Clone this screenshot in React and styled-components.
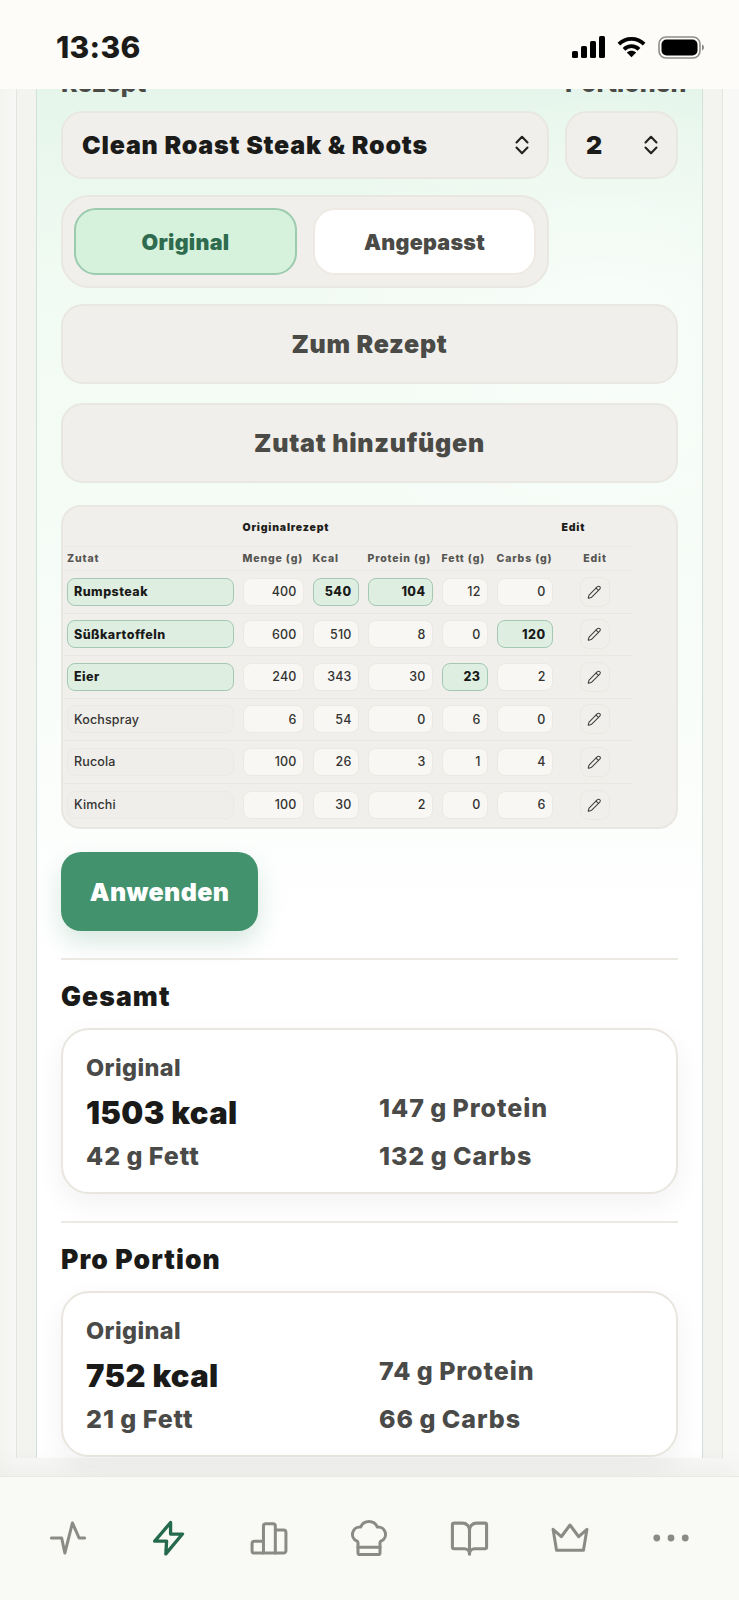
import styled, { createGlobalStyle } from 'styled-components'
import { BookOpen, ChefHat, Pencil } from 'lucide-react'

const GlobalStyle = createGlobalStyle`
  html, body {
    margin: 0;
    padding: 0;
    background: #f6f6f3;
  }

  * {
    box-sizing: border-box;
  }
`

const Screen = styled.div`
  width: 739px;
  height: 1600px;
  display: flex;
  flex-direction: column;
  overflow: hidden;
  font-family: Inter, 'Noto Sans', sans-serif;
  color: #1b1b1a;
`

const StatusBar = styled.header`
  flex: 0 0 89px;
  display: flex;
  align-items: center;
  justify-content: space-between;
  padding: 5px 35px 0 56px;
  background: #fdfcf8;
  position: relative;
  z-index: 2;
`

const Clock = styled.span`
  font-size: 30px;
  font-weight: 800;
  letter-spacing: 0.3px;
`

const StatusIcons = styled.div`
  display: flex;
  align-items: center;
  gap: 12px;
`

const Main = styled.main`
  flex: 1;
  min-height: 0;
  overflow: hidden;
  padding: 0 16px;
  background: linear-gradient(90deg, #f3f3f0, #f8f8f6 16px);
`

const Panel = styled.div`
  height: 100%;
  padding: 0 19px;
  background: #f3f3f0;
  border-left: 1px solid #e4e4e0;
  border-right: 1px solid #e4e4e0;
`

const Card = styled.div`
  height: 100%;
  padding: 0 24px;
  border-left: 1px solid #cfe3dc;
  border-right: 1px solid #cfe3dc;
  background:
    radial-gradient(ellipse 300px 260px at 85% 260px, rgba(255, 255, 255, 0.5), rgba(255, 255, 255, 0)),
    linear-gradient(180deg, #e4f5ea 0, #f1fbf3 210px, #f6fcf7 500px, #ffffff 880px);
`

const FormGrid = styled.div`
  display: grid;
  grid-template-columns: 488px 113px;
  column-gap: 16px;
  margin-top: -18px;
`

const FieldLabel = styled.label`
  display: block;
  height: 40px;
  font-size: 25px;
  line-height: 24px;
  font-weight: 800;
  color: #4a4a46;
  white-space: nowrap;
`

const Select = styled.div`
  height: 68px;
  display: flex;
  align-items: center;
  justify-content: space-between;
  padding: 0 18px 0 19px;
  background: #f1efeb;
  border: 2px solid #e9e7e1;
  border-radius: 22px;
  font-size: 25px;
  font-weight: 900;
  letter-spacing: 0.8px;
`

const Segmented = styled.div`
  margin-top: 16px;
  height: 93px;
  display: grid;
  grid-template-columns: 1fr 1fr;
  gap: 16px;
  padding: 11px;
  background: #f1efeb;
  border: 2px solid #e9e7e1;
  border-radius: 28px;
`

const SegmentButton = styled.button`
  font: 900 21.5px Inter, sans-serif;
  letter-spacing: 0.25px;
  color: ${(p) => (p.$active ? '#2f6b4f' : '#4a4a46')};
  background: ${(p) => (p.$active ? '#d6f2dc' : '#ffffff')};
  border: 2px solid ${(p) => (p.$active ? '#9ccbb0' : '#eeeae3')};
  border-radius: 22px;
`

const WideButton = styled.button`
  display: block;
  width: 617px;
  height: 80px;
  margin-top: ${(p) => p.$top}px;
  font: 900 25px Inter, sans-serif;
  letter-spacing: 0.75px;
  color: #4a4a46;
  background: #f1efeb;
  border: 2px solid #e9e7e1;
  border-radius: 22px;
`

const TableBox = styled.div`
  margin-top: 22px;
  width: 617px;
  height: 324px;
  padding-top: 1px;
  background: #f1efeb;
  border: 2px solid #e9e7e1;
  border-radius: 20px;
  overflow: hidden;
`

const Table = styled.table`
  width: 569px;
  table-layout: fixed;
  border-collapse: separate;
  border-spacing: 0;
`

const Col = styled.col`
  width: ${(p) => p.$w}px;
`

const GroupHead = styled.th`
  height: 39px;
  padding: 0 4px;
  text-align: left;
  font-size: 10.5px;
  font-weight: 900;
  letter-spacing: 0.8px;
  color: #1f1f1e;
  border-bottom: 1px solid #ebe9e4;
`

const ColHead = styled.th`
  height: 24px;
  padding: 0 4px;
  text-align: ${(p) => (p.$center ? 'center' : 'left')};
  font-size: 10.5px;
  font-weight: 800;
  letter-spacing: 0.85px;
  color: #565652;
  white-space: nowrap;
  border-bottom: 1px solid #ebe9e4;
`

const Cell = styled.td`
  height: 42.5px;
  padding: 0 5px 0 4px;
  border-bottom: 1px solid #e9e7e2;
  tr:last-child & {
    border-bottom: 0;
  }
`

const Value = styled.span`
  display: flex;
  align-items: center;
  justify-content: ${(p) => (p.$name ? 'flex-start' : 'flex-end')};
  height: 28px;
  padding: 0 6px;
  font-size: 12.5px;
  font-weight: ${(p) => (p.$hit ? 800 : 500)};
  letter-spacing: ${(p) => (p.$hit ? 0.45 : 0.15)}px;
  color: ${(p) => (p.$hit ? '#1a1a19' : '#333331')};
  white-space: nowrap;
  border-radius: 8px;
  background: ${(p) => (p.$hit ? '#deefe2' : p.$name ? '#f0eeea' : '#f8f7f3')};
  border: 1.5px solid ${(p) => (p.$hit ? '#a3c9b2' : '#ece9e4')};
`

const EditButton = styled.button`
  display: flex;
  align-items: center;
  justify-content: center;
  width: 30px;
  height: 30px;
  margin: 0 auto;
  padding: 0;
  color: #3e3e3b;
  background: #f1efeb;
  border: 1.5px solid #ebe8e3;
  border-radius: 9px;
`

const ApplyButton = styled.button`
  display: block;
  width: 197px;
  height: 79px;
  margin-top: 23px;
  font: 900 25px Inter, sans-serif;
  letter-spacing: 0.35px;
  color: #ffffff;
  background: #43926e;
  border: 0;
  border-radius: 20px;
  box-shadow: 0 12px 24px rgba(67, 146, 110, 0.2);
`

const Divider = styled.hr`
  margin: ${(p) => p.$top}px 0 0;
  width: 617px;
  height: 2px;
  border: 0;
  background: #ece9e2;
`

const SectionTitle = styled.h2`
  margin: 20px 0 0;
  height: 32px;
  font-size: 26.5px;
  line-height: 32px;
  font-weight: 900;
  letter-spacing: 1.1px;
  color: #1a1a19;
`

const Summary = styled.section`
  margin-top: 16px;
  width: 617px;
  height: 166px;
  padding: 23px 23px 0;
  background: #ffffff;
  border: 2px solid #e9e6df;
  border-radius: 28px;
  box-shadow: 0 10px 28px rgba(40, 40, 30, 0.06);
`

const SummaryLabel = styled.div`
  height: 30px;
  font-size: 23.5px;
  line-height: 30px;
  font-weight: 800;
  letter-spacing: 0.4px;
  color: #4a4a48;
`

const SummaryGrid = styled.div`
  margin-top: 10px;
  display: grid;
  grid-template-columns: 275px 275px;
  column-gap: 18px;
  grid-auto-rows: 43px;
`

const Kcal = styled.div`
  font-size: 31px;
  line-height: 40px;
  font-weight: 900;
  letter-spacing: 0.35px;
  color: #1a1a19;
`

const Macro = styled.div`
  font-size: 25px;
  line-height: ${(p) => (p.$raised ? 30 : 40)}px;
  font-weight: 800;
  letter-spacing: 0.95px;
  word-spacing: -1px;
  color: #4a4a48;
`

const BottomNav = styled.nav`
  flex: 0 0 124px;
  display: grid;
  grid-template-columns: repeat(7, 1fr);
  align-content: start;
  padding: 42px 18px 0;
  background: #f9f9f6;
  border-top: 1px solid #e8e8e4;
  box-shadow: 0 -8px 24px rgba(60, 70, 70, 0.06);
  position: relative;
`

const NavItem = styled.div`
  display: flex;
  align-items: center;
  justify-content: center;
  height: 38px;
  color: ${(p) => (p.$active ? '#266a4e' : '#8b8b86')};
`

function Chevrons() {
  return (
    <svg width="14" height="20" viewBox="0 0 14 20" fill="none" stroke="#222" strokeWidth="2.1" strokeLinecap="round" strokeLinejoin="round">
      <path d="M1.500 7.500 7 1.800l5.500 5.700" />
      <path d="M1.500 12.500 7 18.200l5.500-5.700" />
    </svg>
  )
}

function SignalIcon() {
  return (
    <svg width="33" height="22" viewBox="0 0 33 22" fill="#000">
      <rect x="0" y="15" width="6" height="7" rx="1.5" />
      <rect x="9" y="10" width="6" height="12" rx="1.5" />
      <rect x="18" y="5" width="6" height="17" rx="1.5" />
      <rect x="27" y="0" width="6" height="22" rx="1.5" />
    </svg>
  )
}

function WifiIcon() {
  return (
    <svg width="29" height="22" viewBox="0 0 31 23" fill="none" stroke="#000" strokeWidth="4">
      <path d="M2 8.500C9.500 1 21.500 1 29 8.500" />
      <path d="M7.500 14c4.500-4.500 11.500-4.500 16 0" />
      <path d="M15.500 22.500 10.500 17.500c3-2.500 7-2.500 10 0z" fill="#000" stroke="none" />
    </svg>
  )
}

function BatteryIcon() {
  return (
    <svg width="46" height="23" viewBox="0 0 46 23">
      <rect x="1" y="1" width="41" height="21" rx="7" fill="none" stroke="#8c8c8a" strokeWidth="1.6" />
      <rect x="3.500" y="3.500" width="36" height="16" rx="5" fill="#000" />
      <path d="M44 8.500c1.300.4 2 1.600 2 3s-.7 2.600-2 3z" fill="#8c8c8a" />
    </svg>
  )
}

function NavSvg({ children, fill = 'none', width = 1.9 }) {
  return (
    <svg width="38" height="38" viewBox="0 0 24 24" fill={fill} stroke="currentColor" strokeWidth={width} strokeLinecap="round" strokeLinejoin="round">
      {children}
    </svg>
  )
}

const rows = [
  { name: 'Rumpsteak', hit: true, values: [400, 540, 104, 12, 0], hits: [1, 2] },
  { name: 'Süßkartoffeln', hit: true, values: [600, 510, 8, 0, 120], hits: [4] },
  { name: 'Eier', hit: true, values: [240, 343, 30, 23, 2], hits: [3] },
  { name: 'Kochspray', values: [6, 54, 0, 6, 0], hits: [] },
  { name: 'Rucola', values: [100, 26, 3, 1, 4], hits: [] },
  { name: 'Kimchi', values: [100, 30, 2, 0, 6], hits: [] },
]

const colWidths = [175.5, 70, 55, 74, 55, 65, 75]
const colHeads = ['Zutat', 'Menge (g)', 'Kcal', 'Protein (g)', 'Fett (g)', 'Carbs (g)']

function SummaryCard({ kcal, protein, fat, carbs }) {
  return (
    <Summary>
      <SummaryLabel>Original</SummaryLabel>
      <SummaryGrid>
        <Kcal>{kcal} kcal</Kcal>
        <Macro $raised>{protein} g Protein</Macro>
        <Macro>{fat} g Fett</Macro>
        <Macro>{carbs} g Carbs</Macro>
      </SummaryGrid>
    </Summary>
  )
}

export default function App() {
  return (
    <Screen>
      <GlobalStyle />
      <StatusBar>
        <Clock>13:36</Clock>
        <StatusIcons>
          <SignalIcon />
          <WifiIcon />
          <BatteryIcon />
        </StatusIcons>
      </StatusBar>
      <Main>
        <Panel>
          <Card>
            <FormGrid>
              <div>
                <FieldLabel>Rezept</FieldLabel>
                <Select>
                  Clean Roast Steak &amp; Roots
                  <Chevrons />
                </Select>
              </div>
              <div>
                <FieldLabel>Portionen</FieldLabel>
                <Select>
                  2
                  <Chevrons />
                </Select>
              </div>
              <Segmented>
                <SegmentButton $active>Original</SegmentButton>
                <SegmentButton>Angepasst</SegmentButton>
              </Segmented>
            </FormGrid>
            <WideButton $top={16}>Zum Rezept</WideButton>
            <WideButton $top={19}>Zutat hinzufügen</WideButton>
            <TableBox>
              <Table>
                <colgroup>
                  {colWidths.map((w, i) => (
                    <Col key={i} $w={w} />
                  ))}
                </colgroup>
                <thead>
                  <tr>
                    <GroupHead />
                    <GroupHead colSpan={5}>Originalrezept</GroupHead>
                    <GroupHead>Edit</GroupHead>
                  </tr>
                  <tr>
                    {colHeads.map((head) => (
                      <ColHead key={head}>{head}</ColHead>
                    ))}
                    <ColHead $center>Edit</ColHead>
                  </tr>
                </thead>
                <tbody>
                  {rows.map((row) => (
                    <tr key={row.name}>
                      <Cell>
                        <Value $name $hit={row.hit}>{row.name}</Value>
                      </Cell>
                      {row.values.map((value, i) => (
                        <Cell key={i}>
                          <Value $hit={row.hits.includes(i)}>{value}</Value>
                        </Cell>
                      ))}
                      <Cell>
                        <EditButton>
                          <Pencil size={14.5} strokeWidth={1.7} />
                        </EditButton>
                      </Cell>
                    </tr>
                  ))}
                </tbody>
              </Table>
            </TableBox>
            <ApplyButton>Anwenden</ApplyButton>
            <Divider $top={27} />
            <SectionTitle>Gesamt</SectionTitle>
            <SummaryCard kcal={1503} protein={147} fat={42} carbs={132} />
            <Divider $top={27} />
            <SectionTitle>Pro Portion</SectionTitle>
            <SummaryCard kcal={752} protein={74} fat={21} carbs={66} />
          </Card>
        </Panel>
      </Main>
      <BottomNav>
        <NavItem>
          <NavSvg>
            <path d="M1.500 12h6.500l2 9.500L14.800 2.500 19 12h3.500" />
          </NavSvg>
        </NavItem>
        <NavItem $active>
          <NavSvg width={2.1}>
            <path d="M13 2.200 3 14h7.500L10 22 20.500 9.500H13z" />
          </NavSvg>
        </NavItem>
        <NavItem>
          <NavSvg>
            <path d="M8.500 21.500V4.500A1.500 1.500 0 0 1 10 3h4.500A1.500 1.500 0 0 1 16 4.500v17" />
            <path d="M8.500 14h-5.700A1.500 1.500 0 0 0 1.300 15.500V20a1.500 1.500 0 0 0 1.500 1.500h18.400a1.500 1.500 0 0 0 1.500-1.500V8.500A1.500 1.500 0 0 0 21.200 7H16" />
          </NavSvg>
        </NavItem>
        <NavItem>
          <ChefHat size={44} strokeWidth={1.65} />
        </NavItem>
        <NavItem>
          <BookOpen size={41} strokeWidth={1.8} />
        </NavItem>
        <NavItem>
          <NavSvg>
            <path d="M1.300 6.500l5.200 4.700L12 3.800l5.500 7.400 5.200-4.700-2.200 13.300h-17z" />
          </NavSvg>
        </NavItem>
        <NavItem>
          <NavSvg fill="currentColor">
            <circle cx="3" cy="12" r="1.200" />
            <circle cx="12" cy="12" r="1.200" />
            <circle cx="21" cy="12" r="1.200" />
          </NavSvg>
        </NavItem>
      </BottomNav>
    </Screen>
  )
}
